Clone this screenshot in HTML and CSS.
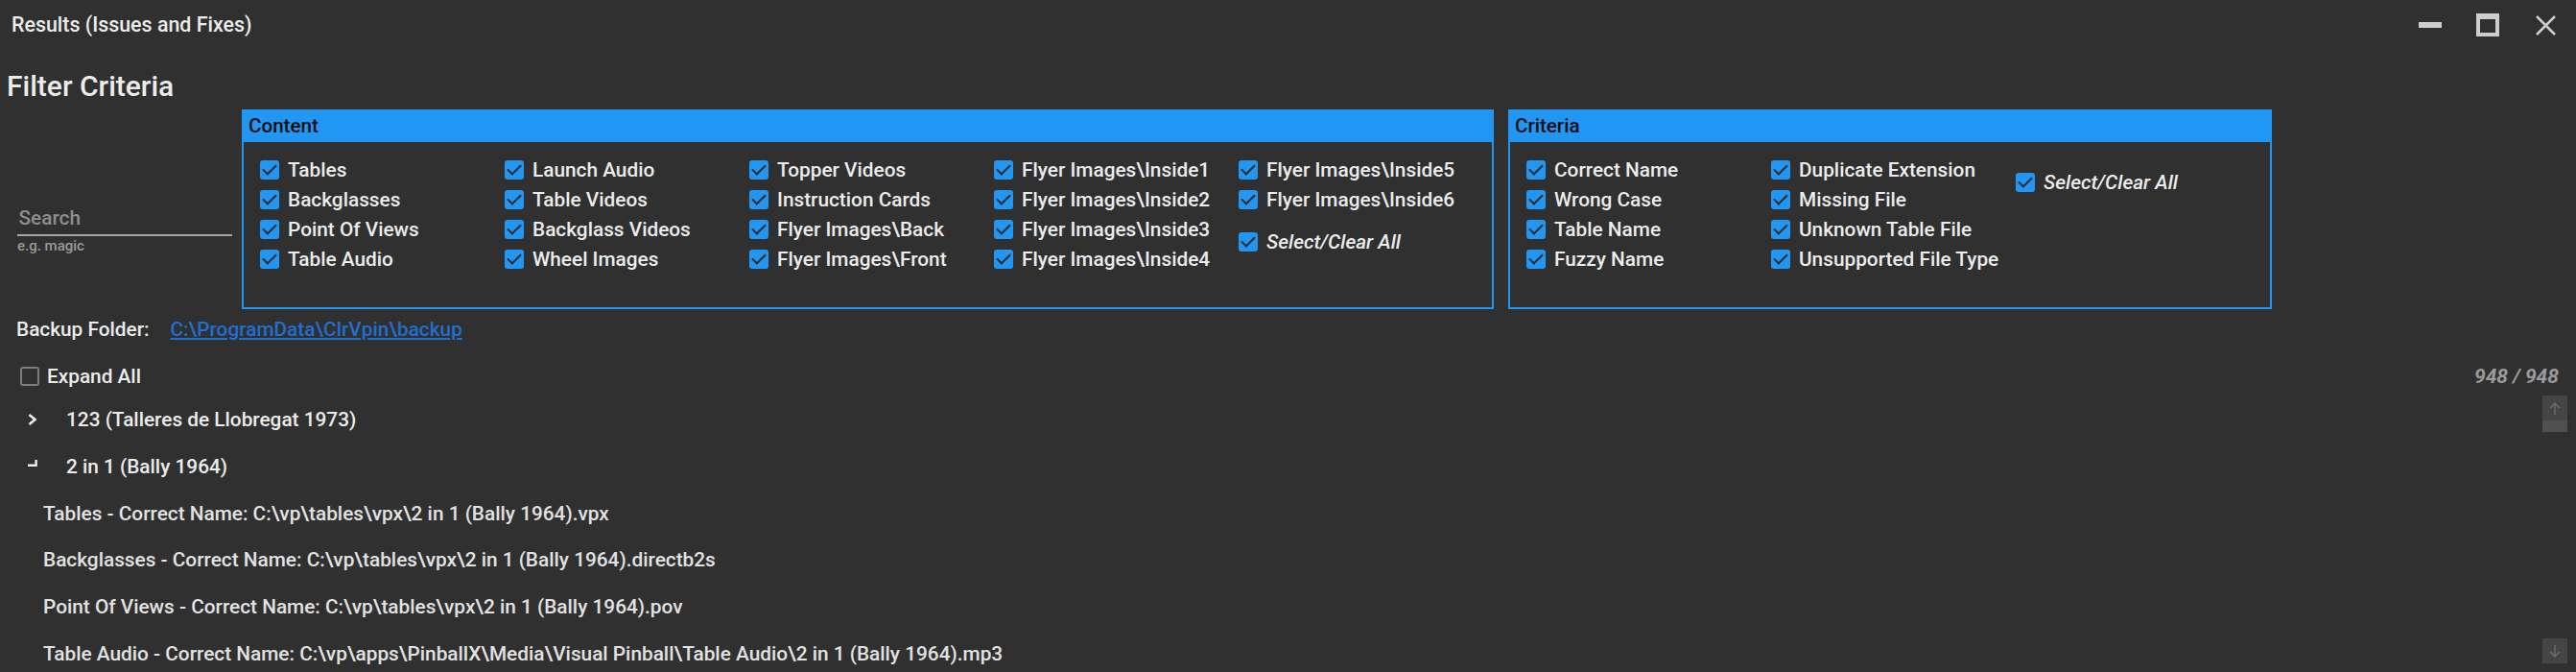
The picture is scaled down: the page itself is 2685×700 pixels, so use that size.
FILE: index.html
```html
<!DOCTYPE html>
<html lang="en">
<head>
  <meta charset="UTF-8">
  <title>Results (Issues and Fixes)</title>
  <link rel="stylesheet" href="styles.css">
</head>
<body>
  <div class="titlebar">
    <span class="title">Results (Issues and Fixes)</span>
    <div class="window-buttons">
      <button class="win-btn" title="Minimize">
        <svg width="24" height="24" viewBox="0 0 24 24"><rect x="0" y="9" width="24" height="6" fill="#cdcdcd"/></svg>
      </button>
      <button class="win-btn" title="Maximize">
        <svg width="24" height="24" viewBox="0 0 24 24"><path d="M0 0H24V24H0ZM4 6V20H20V6Z" fill="#cdcdcd" fill-rule="evenodd"/></svg>
      </button>
      <button class="win-btn" title="Close">
        <svg width="21" height="21" viewBox="0 0 21 21"><path d="M1 1L20 20M20 1L1 20" stroke="#cdcdcd" stroke-width="2.5"/></svg>
      </button>
    </div>
  </div>

  <h1>Filter Criteria</h1>

  <div class="filters">
    <div class="search">
      <div class="search-input">Search</div>
      <div class="search-hint">e.g. magic</div>
    </div>

    <div class="group content-group">
      <div class="group-header">Content</div>
      <div class="group-body">
        <div class="col">
          <label class="check"><span class="box"></span>Tables</label>
          <label class="check"><span class="box"></span>Backglasses</label>
          <label class="check"><span class="box"></span>Point Of Views</label>
          <label class="check"><span class="box"></span>Table Audio</label>
        </div>
        <div class="col">
          <label class="check"><span class="box"></span>Launch Audio</label>
          <label class="check"><span class="box"></span>Table Videos</label>
          <label class="check"><span class="box"></span>Backglass Videos</label>
          <label class="check"><span class="box"></span>Wheel Images</label>
        </div>
        <div class="col">
          <label class="check"><span class="box"></span>Topper Videos</label>
          <label class="check"><span class="box"></span>Instruction Cards</label>
          <label class="check"><span class="box"></span>Flyer Images\Back</label>
          <label class="check"><span class="box"></span>Flyer Images\Front</label>
        </div>
        <div class="col">
          <label class="check"><span class="box"></span>Flyer Images\Inside1</label>
          <label class="check"><span class="box"></span>Flyer Images\Inside2</label>
          <label class="check"><span class="box"></span>Flyer Images\Inside3</label>
          <label class="check"><span class="box"></span>Flyer Images\Inside4</label>
        </div>
        <div class="col">
          <label class="check"><span class="box"></span>Flyer Images\Inside5</label>
          <label class="check"><span class="box"></span>Flyer Images\Inside6</label>
          <label class="check all"><span class="box"></span>Select/Clear All</label>
        </div>
      </div>
    </div>

    <div class="group criteria-group">
      <div class="group-header">Criteria</div>
      <div class="group-body">
        <div class="col">
          <label class="check"><span class="box"></span>Correct Name</label>
          <label class="check"><span class="box"></span>Wrong Case</label>
          <label class="check"><span class="box"></span>Table Name</label>
          <label class="check"><span class="box"></span>Fuzzy Name</label>
        </div>
        <div class="col">
          <label class="check"><span class="box"></span>Duplicate Extension</label>
          <label class="check"><span class="box"></span>Missing File</label>
          <label class="check"><span class="box"></span>Unknown Table File</label>
          <label class="check"><span class="box"></span>Unsupported File Type</label>
        </div>
        <div class="col">
          <label class="check all"><span class="box"></span>Select/Clear All</label>
        </div>
      </div>
    </div>
  </div>

  <div class="backup">
    <span>Backup Folder:</span>
    <a href="#">C:\ProgramData\ClrVpin\backup</a>
  </div>

  <div class="expand-row">
    <label class="expand"><span class="box off"></span>Expand All</label>
    <span class="counter">948 / 948</span>
  </div>

  <div class="results">
    <div class="tree">
      <div class="node">
        <span class="toggle">
          <svg width="10" height="12" viewBox="0 0 10 12"><path d="M1.5 1L7.5 6L1.5 11" fill="none" stroke="#ececec" stroke-width="2.6"/></svg>
        </span>
        123 (Talleres de Llobregat 1973)
      </div>
      <div class="node">
        <span class="toggle">
          <svg class="open" width="10" height="7" viewBox="0 0 10 7"><path d="M0 5.8H8.6V0" fill="none" stroke="#ececec" stroke-width="2.4"/></svg>
        </span>
        2 in 1 (Bally 1964)
      </div>
      <div class="node leaf">Tables - Correct Name: C:\vp\tables\vpx\2 in 1 (Bally 1964).vpx</div>
      <div class="node leaf">Backglasses - Correct Name: C:\vp\tables\vpx\2 in 1 (Bally 1964).directb2s</div>
      <div class="node leaf">Point Of Views - Correct Name: C:\vp\tables\vpx\2 in 1 (Bally 1964).pov</div>
      <div class="node leaf">Table Audio - Correct Name: C:\vp\apps\PinballX\Media\Visual Pinball\Table Audio\2 in 1 (Bally 1964).mp3</div>
    </div>
    <div class="scrollbar">
      <div class="sb-btn">
        <svg width="12" height="13" viewBox="0 0 12 13"><path d="M6 13V1M1 6L6 1L11 6" fill="none" stroke="#6e6e6e" stroke-width="1.4"/></svg>
      </div>
      <div class="sb-thumb"></div>
      <div class="sb-track"></div>
      <div class="sb-btn">
        <svg width="12" height="13" viewBox="0 0 12 13"><path d="M6 0V12M1 7L6 12L11 7" fill="none" stroke="#6e6e6e" stroke-width="1.4"/></svg>
      </div>
    </div>
  </div>
</body>
</html>
```

FILE: styles.css
```css
* { box-sizing: border-box; }

body {
  margin: 0;
  height: 700px;
  overflow: hidden;
  background: #303030;
  color: #ececec;
  font-family: Roboto, "Liberation Sans", sans-serif;
  font-size: 20.8px;
  font-weight: 500;
}

.titlebar {
  display: flex;
  align-items: center;
  height: 52px;
  padding-left: 12px;
}
.title { flex: 1; font-size: 21.4px; line-height: 52px; }
.window-buttons { display: flex; padding-right: 2px; }
.win-btn {
  width: 60px;
  height: 52px;
  padding: 0;
  border: 0;
  background: none;
  display: flex;
  align-items: center;
  justify-content: center;
}

h1 {
  margin: 18px 0 0;
  padding-left: 7px;
  font-size: 30px;
  font-weight: 500;
  line-height: 40px;
}

.filters {
  display: flex;
  height: 208px;
  margin-top: 4px;
  padding-left: 18px;
}
.search {
  width: 224px;
  margin: 96px 10px 0 0;
  align-self: flex-start;
}
.search-input {
  height: 36px;
  line-height: 34px;
  padding-left: 1.5px;
  color: #8e8e8e;
  border-bottom: 2px solid #a6a6a6;
}
.search-hint {
  font-size: 15px;
  line-height: 20px;
  color: #9a9a9a;
}

.group {
  display: flex;
  flex-direction: column;
  border: 2px solid #2196f3;
}
.content-group { width: 1305px; }
.criteria-group { width: 796px; margin-left: 15px; }
.group-header {
  height: 32px;
  line-height: 30px;
  padding-left: 5px;
  background: #2196f3;
  color: #0d0d0d;
  font-size: 20.6px;
}
.group-body {
  flex: 1;
  display: flex;
  padding: 13.5px 0 0 17px;
}
.col {
  width: 255px;
  display: flex;
  flex-direction: column;
}

.check {
  display: flex;
  align-items: center;
  gap: 9px;
  height: 31px;
  white-space: nowrap;
}
.check.all {
  margin-top: 12.5px;
  font-style: italic;
}

.box {
  width: 20px;
  height: 20px;
  flex: none;
  border-radius: 3px;
  background: #2196f3;
  display: flex;
  align-items: center;
  justify-content: center;
}
.box::after {
  content: "";
  width: 12px;
  height: 6px;
  border-left: 2.2px solid #2b2b2b;
  border-bottom: 2.2px solid #2b2b2b;
  transform: translateY(-2px) rotate(-45deg);
}
.box.off {
  background: none;
  border: 2px solid #7d7d7d;
}
.box.off::after { display: none; }

.backup {
  display: flex;
  gap: 22px;
  height: 30px;
  margin-top: 6px;
  padding-left: 17px;
  line-height: 30px;
}
.backup a { color: #1f6fd1; }

.expand-row {
  display: flex;
  align-items: center;
  justify-content: space-between;
  height: 30px;
  margin-top: 19px;
  padding: 0 18px 0 21px;
}
.expand { display: flex; align-items: center; gap: 8px; }
.counter {
  font-size: 21px;
  font-style: italic;
  font-weight: 700;
  color: #9a9a9a;
}

.results {
  display: flex;
  height: 288px;
  margin-top: 5px;
}
.tree {
  flex: 1;
  overflow: hidden;
  padding: 1px 0 0 29px;
}
.node {
  display: flex;
  align-items: center;
  height: 48.7px;
  white-space: nowrap;
}
.toggle { width: 40px; flex: none; display: flex; align-items: center; }
.toggle .open { margin-bottom: 8px; }
.leaf { padding-left: 16px; color: #e2e2e2; }

.scrollbar {
  width: 26px;
  margin: 0 9px 9px 0;
  display: flex;
  flex-direction: column;
}
.sb-btn {
  height: 26px;
  background: #454545;
  display: flex;
  align-items: center;
  justify-content: center;
}
.sb-thumb { height: 12px; background: #505050; }
.sb-track { flex: 1; }
```
